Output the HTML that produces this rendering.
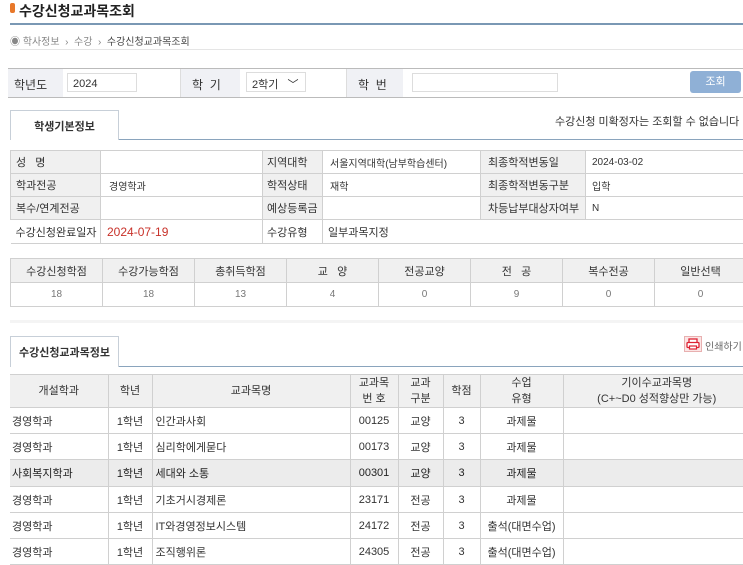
<!DOCTYPE html>
<html><head><meta charset="utf-8">
<style>
*{box-sizing:border-box;margin:0;padding:0}
body{width:743px;height:562px;overflow:hidden;background:#fff;font-family:"Liberation Sans","Noto Sans CJK KR","NanumGothic",sans-serif;color:#333;position:relative;font-size:11px}
.abs{position:absolute;white-space:nowrap}
table{border-collapse:collapse;table-layout:fixed;position:absolute}
td,th{border:1px solid #d0d0d0;overflow:hidden;white-space:nowrap}
</style></head><body>
<div class="abs" style="left:10px;top:3px;width:5px;height:10px;background:#e8782a;border-radius:2px"></div>
<div class="abs" style="left:19px;top:1px;font-size:14px;font-weight:bold;color:#222">수강신청교과목조회</div>
<div class="abs" style="left:10px;top:23px;width:733px;height:2px;background:#7a98b4"></div>
<div class="abs" style="left:10px;top:33px;font-size:10px;color:#888">◉ 학사정보 &nbsp;›&nbsp; 수강 &nbsp;›&nbsp; <span style="color:#444">수강신청교과목조회</span></div>
<div class="abs" style="left:10px;top:49px;width:733px;height:1px;background:#e5e5e5"></div>

<div class="abs" style="left:8px;top:68px;width:735px;height:30px;border-top:1px solid #bbb;border-bottom:1px solid #bbb;background:#fff"></div>
<div class="abs" style="left:8px;top:69px;width:55px;height:28px;background:#f0f1f5"></div>
<div class="abs" style="left:180px;top:69px;width:60px;height:28px;background:#f0f1f5;border-left:1px solid #ddd"></div>
<div class="abs" style="left:346px;top:69px;width:57px;height:28px;background:#f0f1f5;border-left:1px solid #ddd"></div>
<div class="abs" style="left:14px;top:76px;font-size:12px">학년도</div>
<div class="abs" style="left:67px;top:73px;width:70px;height:19px;border:1px solid #ddd;font-size:11px;padding:4px 0 0 5px">2024</div>
<div class="abs" style="left:192px;top:76px;font-size:12px">학 &nbsp;기</div>
<div class="abs" style="left:246px;top:72px;width:60px;height:20px;border:1px solid #ddd;font-size:11px;padding:3px 0 0 5px">2학기 &nbsp; ﹀</div>
<div class="abs" style="left:358px;top:76px;font-size:12px">학 &nbsp;번</div>
<div class="abs" style="left:412px;top:73px;width:146px;height:19px;border:1px solid #ddd"></div>
<div class="abs" style="left:690px;top:71px;width:51px;height:22px;background:#8fb0d6;border-radius:3px;color:#fff;font-size:11px;text-align:center;line-height:22px">조회</div>

<div class="abs" style="left:10px;top:110px;width:109px;height:30px;border:1px solid #c7cfd8;border-bottom:none;background:#fff;font-size:11px;font-weight:bold;text-align:center;line-height:32px;z-index:2">학생기본정보</div>
<div class="abs" style="left:10px;top:139px;width:733px;height:1px;background:#8aa4bd"></div>
<div class="abs" style="left:555px;top:113px;font-size:11px;color:#333">수강신청 미확정자는 조회할 수 없습니다</div>

<table style="left:10px;top:150px;width:740px;font-size:10px">
<colgroup><col style="width:90px"><col style="width:162px"><col style="width:60px"><col style="width:158px"><col style="width:105px"><col style="width:165px"></colgroup>
<tr style="height:23px"><td style="background:#f0f0f0;padding-left:5px;font-size:11px">성 &nbsp;&nbsp;명</td><td></td><td style="background:#f0f0f0;padding-left:4px;font-size:11px">지역대학</td><td style="padding-left:7px">서울지역대학(남부학습센터)</td><td style="background:#f0f0f0;padding-left:7px;font-size:11px">최종학적변동일</td><td style="padding-left:6px">2024-03-02</td></tr>
<tr style="height:23px"><td style="background:#f0f0f0;padding-left:5px;font-size:11px">학과전공</td><td style="padding-left:8px">경영학과</td><td style="background:#f0f0f0;padding-left:4px;font-size:11px">학적상태</td><td style="padding-left:7px">재학</td><td style="background:#f0f0f0;padding-left:7px;font-size:11px">최종학적변동구분</td><td style="padding-left:6px">입학</td></tr>
<tr style="height:23px"><td style="background:#f0f0f0;padding-left:5px;font-size:11px">복수/연계전공</td><td></td><td style="background:#f0f0f0;padding-left:4px;font-size:11px">예상등록금</td><td></td><td style="background:#f0f0f0;padding-left:7px;font-size:11px">차등납부대상자여부</td><td style="padding-left:6px">N</td></tr>
<tr style="height:24px"><td style="padding-left:5px;font-size:11px;border-left:none">수강신청완료일자</td><td style="padding-left:6px;color:#c8322a;font-size:12px">2024-07-19</td><td style="padding-left:4px;font-size:11px">수강유형</td><td style="padding-left:5px;font-size:11px;border-right:none" colspan="3">일부과목지정</td></tr>
</table>

<table style="left:10px;top:258px;width:736px;font-size:10px;text-align:center">
<colgroup><col style="width:92px"><col style="width:92px"><col style="width:92px"><col style="width:92px"><col style="width:92px"><col style="width:92px"><col style="width:92px"><col style="width:92px"></colgroup>
<tr style="height:24px;background:#f0f0f0;font-size:11px"><td>수강신청학점</td><td>수강가능학점</td><td>총취득학점</td><td>교 &nbsp;&nbsp;양</td><td>전공교양</td><td>전 &nbsp;&nbsp;공</td><td>복수전공</td><td>일반선택</td></tr>
<tr style="height:24px;color:#777"><td>18</td><td>18</td><td>13</td><td>4</td><td>0</td><td>9</td><td>0</td><td>0</td></tr>
</table>

<div class="abs" style="left:10px;top:320px;width:733px;height:3px;background:#f4f4f4"></div>

<div class="abs" style="left:10px;top:336px;width:109px;height:31px;border:1px solid #c7cfd8;border-bottom:none;background:#fff;font-size:11px;font-weight:bold;text-align:center;line-height:32px;z-index:2">수강신청교과목정보</div>
<div class="abs" style="left:10px;top:366px;width:733px;height:1px;background:#8aa4bd"></div>
<svg class="abs" style="left:684px;top:336px" width="18" height="16" viewBox="0 0 18 16"><rect x="0.5" y="0.5" width="17" height="15" fill="#fbe5e5" stroke="#e8b0b0"/><rect x="5" y="3" width="8" height="4" fill="#fff" stroke="#d23" stroke-width="1.3"/><rect x="3" y="6.5" width="12" height="5" rx="1" fill="#fff" stroke="#d23" stroke-width="1.3"/><rect x="5.5" y="10" width="7" height="3" fill="#fff" stroke="#d23" stroke-width="1.2"/></svg>
<div class="abs" style="left:705px;top:338px;font-size:10px;color:#666">인쇄하기</div>

<table style="left:10px;top:374px;width:740px;font-size:11px">
<colgroup><col style="width:98px"><col style="width:44px"><col style="width:198px"><col style="width:48px"><col style="width:45px"><col style="width:37px"><col style="width:83px"><col style="width:187px"></colgroup>
<tr style="height:33px;background:#f0f0f0;text-align:center;line-height:16px"><td style="border-left:none">개설학과</td><td>학년</td><td>교과목명</td><td>교과목<br>번 호</td><td>교과<br>구분</td><td>학점</td><td>수업<br>유형</td><td style="border-right:none">기이수교과목명<br>(C+~D0 성적향상만 가능)</td></tr>
<tr style="height:26px"><td style="border-left:none;padding-left:2px">경영학과</td><td style="text-align:center">1학년</td><td style="padding-left:3px">인간과사회</td><td style="text-align:center">00125</td><td style="text-align:center">교양</td><td style="text-align:center">3</td><td style="text-align:center">과제물</td><td style="border-right:none"></td></tr>
<tr style="height:26px"><td style="border-left:none;padding-left:2px">경영학과</td><td style="text-align:center">1학년</td><td style="padding-left:3px">심리학에게묻다</td><td style="text-align:center">00173</td><td style="text-align:center">교양</td><td style="text-align:center">3</td><td style="text-align:center">과제물</td><td style="border-right:none"></td></tr>
<tr style="height:27px;background:#ececec;color:#222"><td style="border-left:none;padding-left:2px">사회복지학과</td><td style="text-align:center">1학년</td><td style="padding-left:3px">세대와 소통</td><td style="text-align:center">00301</td><td style="text-align:center">교양</td><td style="text-align:center">3</td><td style="text-align:center">과제물</td><td style="border-right:none"></td></tr>
<tr style="height:26px"><td style="border-left:none;padding-left:2px">경영학과</td><td style="text-align:center">1학년</td><td style="padding-left:3px">기초거시경제론</td><td style="text-align:center">23171</td><td style="text-align:center">전공</td><td style="text-align:center">3</td><td style="text-align:center">과제물</td><td style="border-right:none"></td></tr>
<tr style="height:26px"><td style="border-left:none;padding-left:2px">경영학과</td><td style="text-align:center">1학년</td><td style="padding-left:3px">IT와경영정보시스템</td><td style="text-align:center">24172</td><td style="text-align:center">전공</td><td style="text-align:center">3</td><td style="text-align:center">출석(대면수업)</td><td style="border-right:none"></td></tr>
<tr style="height:26px"><td style="border-left:none;padding-left:2px">경영학과</td><td style="text-align:center">1학년</td><td style="padding-left:3px">조직행위론</td><td style="text-align:center">24305</td><td style="text-align:center">전공</td><td style="text-align:center">3</td><td style="text-align:center">출석(대면수업)</td><td style="border-right:none"></td></tr>
</table>
</body></html>
